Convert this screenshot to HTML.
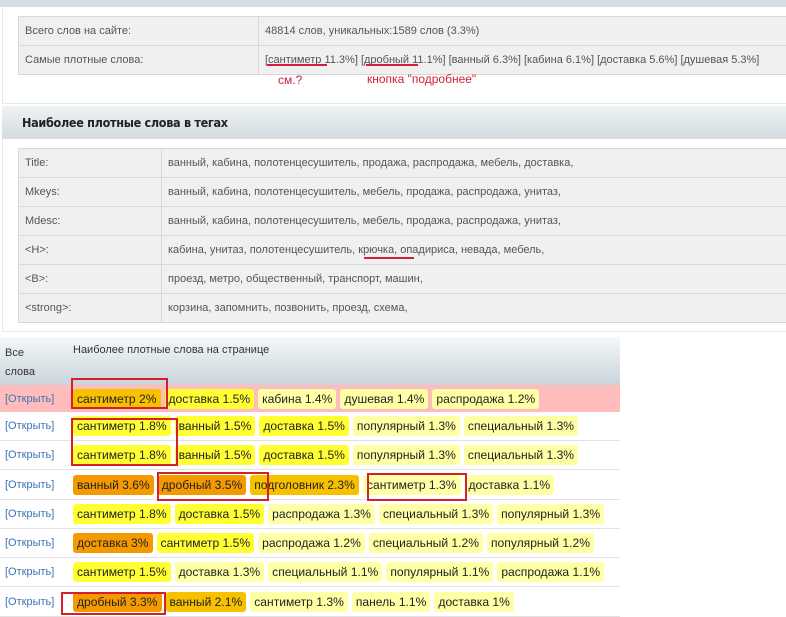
<!DOCTYPE html>
<html><head><meta charset="utf-8">
<style>
*{margin:0;padding:0;box-sizing:border-box}
body{width:786px;height:617px;overflow:hidden;background:#fff;font-family:"Liberation Sans",sans-serif;position:relative}
.abs{position:absolute}
.topbar{left:0;top:0;width:786px;height:7px;background:#d5dde2}
.panel1{left:2px;top:7px;width:784px;height:97px;border-left:1px solid #e4e8ea;border-bottom:1px solid #e4e8ea}
table.t{border-collapse:collapse;background:#f0f0f0;font-family:"Liberation Sans",sans-serif;font-size:11px;color:#555;table-layout:fixed}
table.t td{border:1px solid #d8d8d8;padding:0 0 0 6px;height:29px;white-space:nowrap;overflow:hidden}
.hdr2{left:2px;top:106px;width:784px;height:33px;background:linear-gradient(#eef2f4,#d3dce1);font:bold 12.5px "DejaVu Sans Condensed","Liberation Sans",sans-serif;color:#222;padding:9px 0 0 20px;letter-spacing:-0.3px}
.panel2{left:2px;top:139px;width:784px;height:193px;border-left:1px solid #e4e8ea;border-bottom:1px solid #e4e8ea}
.red{color:#d0203a;font-family:"Liberation Sans",sans-serif;font-size:12px}
.redline{background:#d0203a;height:2px}
.box{border:2px solid #d42028}
.h3{left:0;top:337px;width:620px;height:48px;background:linear-gradient(#f5f7f8,#c9d4db);font-size:11px;color:#333}
.row{position:absolute;left:0;width:620px;height:29px;border-bottom:1px solid #e2e2e2;display:flex;align-items:center}
.row a{font-size:11px;color:#3b73b5;width:73px;flex-shrink:0;padding-left:5px;text-decoration:none}
.tg{display:inline-block;flex-shrink:0;font-size:12.1px;color:#222;height:20px;line-height:20px;padding:0 4px;border-radius:3px;margin-right:4px;white-space:nowrap}
.o{background:#f49a00}.g{background:#f7c100}.y{background:#ffff33}.p{background:#ffffa6}
</style></head><body>
<div class="abs topbar"></div>
<div class="abs panel1"></div>
<table class="t abs" style="left:18px;top:16px;width:770px">
<tr><td style="width:240px">Всего слов на сайте:</td><td>48814 слов, уникальных:1589 слов (3.3%)</td></tr>
<tr><td>Самые плотные слова:</td><td>[сантиметр 11.3%] [дробный 11.1%] [ванный 6.3%] [кабина 6.1%] [доставка 5.6%] [душевая 5.3%]</td></tr>
</table>
<div class="abs redline" style="left:267px;top:64px;width:60px"></div>
<div class="abs redline" style="left:366px;top:64px;width:52px"></div>
<div class="abs red" style="left:278px;top:73px">см.?</div>
<div class="abs red" style="left:367px;top:72px">кнопка "подробнее"</div>

<div class="abs hdr2">Наиболее плотные слова в тегах</div>
<div class="abs panel2"></div>
<table class="t abs" style="left:18px;top:148px;width:770px">
<tr><td style="width:143px">Title:</td><td>ванный, кабина, полотенцесушитель, продажа, распродажа, мебель, доставка,</td></tr>
<tr><td>Mkeys:</td><td>ванный, кабина, полотенцесушитель, мебель, продажа, распродажа, унитаз,</td></tr>
<tr><td>Mdesc:</td><td>ванный, кабина, полотенцесушитель, мебель, продажа, распродажа, унитаз,</td></tr>
<tr><td>&lt;H&gt;:</td><td>кабина, унитаз, полотенцесушитель, крючка, опадириса, невада, мебель,</td></tr>
<tr><td>&lt;B&gt;:</td><td>проезд, метро, общественный, транспорт, машин,</td></tr>
<tr><td>&lt;strong&gt;:</td><td>корзина, запомнить, позвонить, проезд, схема,</td></tr>
</table>
<div class="abs redline" style="left:364px;top:257px;width:50px"></div>

<div class="abs h3">
<div class="abs" style="left:5px;top:7px;line-height:19px">Все<br>слова</div>
<div class="abs" style="left:73px;top:7px">Наиболее плотные слова на странице</div>
</div>

<div class="row" style="top:385px;height:27px;background:#ffbcbc;border:none"><a>[Открыть]</a><span class="tg g">сантиметр 2%</span><span class="tg y">доставка 1.5%</span><span class="tg p">кабина 1.4%</span><span class="tg p">душевая 1.4%</span><span class="tg p">распродажа 1.2%</span></div>
<div class="row" style="top:412px"><a>[Открыть]</a><span class="tg y">сантиметр 1.8%</span><span class="tg y">ванный 1.5%</span><span class="tg y">доставка 1.5%</span><span class="tg p">популярный 1.3%</span><span class="tg p">специальный 1.3%</span></div>
<div class="row" style="top:441px"><a>[Открыть]</a><span class="tg y">сантиметр 1.8%</span><span class="tg y">ванный 1.5%</span><span class="tg y">доставка 1.5%</span><span class="tg p">популярный 1.3%</span><span class="tg p">специальный 1.3%</span></div>
<div class="row" style="top:471px"><a>[Открыть]</a><span class="tg o">ванный 3.6%</span><span class="tg o">дробный 3.5%</span><span class="tg g">подголовник 2.3%</span><span class="tg p">сантиметр 1.3%</span><span class="tg p">доставка 1.1%</span></div>
<div class="row" style="top:500px"><a>[Открыть]</a><span class="tg y">сантиметр 1.8%</span><span class="tg y">доставка 1.5%</span><span class="tg p">распродажа 1.3%</span><span class="tg p">специальный 1.3%</span><span class="tg p">популярный 1.3%</span></div>
<div class="row" style="top:529px"><a>[Открыть]</a><span class="tg o">доставка 3%</span><span class="tg y">сантиметр 1.5%</span><span class="tg p">распродажа 1.2%</span><span class="tg p">специальный 1.2%</span><span class="tg p">популярный 1.2%</span></div>
<div class="row" style="top:558px"><a>[Открыть]</a><span class="tg y">сантиметр 1.5%</span><span class="tg p">доставка 1.3%</span><span class="tg p">специальный 1.1%</span><span class="tg p">популярный 1.1%</span><span class="tg p">распродажа 1.1%</span></div>
<div class="row" style="top:588px"><a>[Открыть]</a><span class="tg o">дробный 3.3%</span><span class="tg g">ванный 2.1%</span><span class="tg p">сантиметр 1.3%</span><span class="tg p">панель 1.1%</span><span class="tg p">доставка 1%</span></div>

<div class="abs box" style="left:71px;top:378px;width:97px;height:31px"></div>
<div class="abs box" style="left:71px;top:418px;width:107px;height:48px"></div>
<div class="abs box" style="left:157px;top:472px;width:112px;height:29px"></div>
<div class="abs box" style="left:367px;top:473px;width:100px;height:28px"></div>
<div class="abs box" style="left:61px;top:592px;width:105px;height:23px"></div>
</body></html>
